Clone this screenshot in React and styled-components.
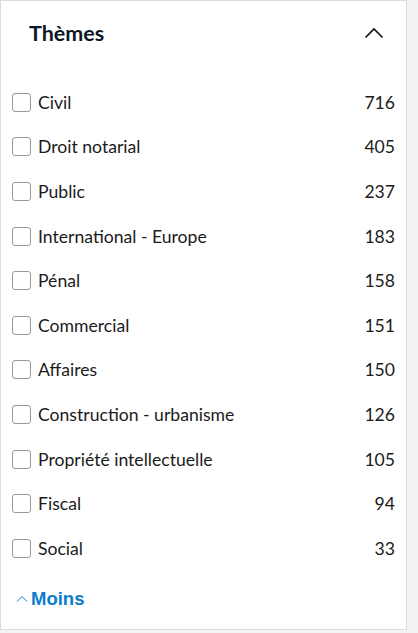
import React, { useState } from 'react'
import styled, { createGlobalStyle } from 'styled-components'

const GlobalStyle = createGlobalStyle`
    html, body {
        margin: 0;
        padding: 0;
        background: #f3f3f3;
        font-family: Lato, "Noto Sans", sans-serif;
    }
`;

const Panel = styled.div`
    box-sizing: border-box;
    width: 407px;
    height: 630px;
    background: #fff;
    border: 1px solid #dcdcdc;
    display: flex;
    flex-direction: column;
`;

const Header = styled.div`
    display: flex;
    align-items: center;
    justify-content: space-between;
    padding: 17px 22px 0 28px;
    height: 30px;
`;

const Title = styled.h3`
    margin: 0;
    font-size: 21.5px;
    font-weight: 700;
    color: #0e1726;
`;

const Toggle = styled.button`
    border: 0;
    background: none;
    padding: 0;
    display: flex;
    cursor: pointer;
`;

const List = styled.ul`
    list-style: none;
    margin: 0;
    padding: 32px 0 0 11px;
    display: flex;
    flex-direction: column;
`;

const Row = styled.li`
    display: flex;
    align-items: center;
    height: 44.6px;
    padding-right: 11px;
`;

const Box = styled.span`
    box-sizing: border-box;
    width: 19px;
    height: 19px;
    border: 1px solid #999;
    border-radius: 3px;
    background: ${p => (p.checked ? '#0a7cd1' : '#fff')};
    margin-right: 7px;
    flex-shrink: 0;
`;

const Label = styled.span`
    flex: 1;
    font-size: 17.6px;
    color: #1b1b1b;
`;

const Count = styled.span`
    font-size: 17.6px;
    color: #1b1b1b;
`;

const More = styled.button`
    display: flex;
    align-items: center;
    gap: 3px;
    border: 0;
    background: none;
    padding: 0 0 0 15px;
    margin-top: 17px;
    color: #0a7cd1;
    font-family: "Liberation Sans", Arial, sans-serif;
    font-weight: 700;
    font-size: 18.5px;
    cursor: pointer;
`;

const themes = [
    ['Civil', 716],
    ['Droit notarial', 405],
    ['Public', 237],
    ['International - Europe', 183],
    ['Pénal', 158],
    ['Commercial', 151],
    ['Affaires', 150],
    ['Construction - urbanisme', 126],
    ['Propriété intellectuelle', 105],
    ['Fiscal', 94],
    ['Social', 33],
]

export default function App() {
    const [checked, setChecked] = useState({})

    return (
        <>
            <GlobalStyle/>
            <Panel>
                <Header>
                    <Title>Thèmes</Title>
                    <Toggle aria-label="Replier">
                        <svg width="20" height="12" viewBox="0 0 20 12" fill="none" stroke="#111" strokeWidth="1.6">
                            <path d="M1.5 10.5 L10 2 L18.5 10.5"/>
                        </svg>
                    </Toggle>
                </Header>
                <List>
                    {
                        themes.map(([name, count]) => (
                            <Row key={name} onClick={() => setChecked({...checked, [name]: !checked[name]})}>
                                <Box checked={checked[name]}/>
                                <Label>{name}</Label>
                                <Count>{count}</Count>
                            </Row>
                        ))
                    }
                </List>
                <More>
                    <svg width="12" height="8" viewBox="0 0 12 8" fill="none" stroke="#0a7cd1" strokeWidth="1">
                        <path d="M1 6.5 L6 1.5 L11 6.5"/>
                    </svg>
                    Moins
                </More>
            </Panel>
        </>
    )
}
